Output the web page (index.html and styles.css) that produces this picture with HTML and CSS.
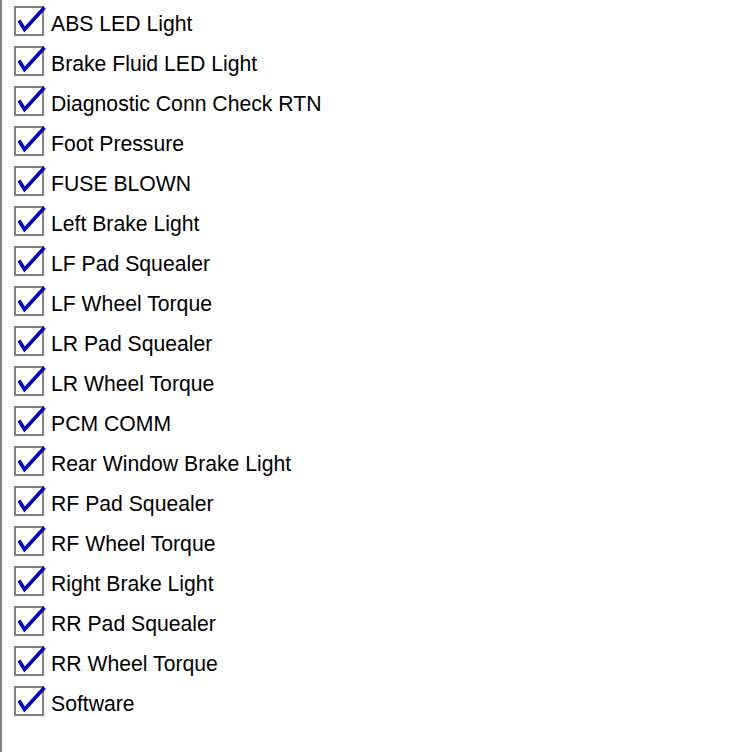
FILE: index.html
```html
<html>
  <head>
    <link rel="stylesheet" href="styles.css">
  </head>
  <body>
    <div class="check-list">
      <div class="item"><span class="box"></span><span class="label">ABS LED Light</span></div>
      <div class="item"><span class="box"></span><span class="label">Brake Fluid LED Light</span></div>
      <div class="item"><span class="box"></span><span class="label">Diagnostic Conn Check RTN</span></div>
      <div class="item"><span class="box"></span><span class="label">Foot Pressure</span></div>
      <div class="item"><span class="box"></span><span class="label">FUSE BLOWN</span></div>
      <div class="item"><span class="box"></span><span class="label">Left Brake Light</span></div>
      <div class="item"><span class="box"></span><span class="label">LF Pad Squealer</span></div>
      <div class="item"><span class="box"></span><span class="label">LF Wheel Torque</span></div>
      <div class="item"><span class="box"></span><span class="label">LR Pad Squealer</span></div>
      <div class="item"><span class="box"></span><span class="label">LR Wheel Torque</span></div>
      <div class="item"><span class="box"></span><span class="label">PCM COMM</span></div>
      <div class="item"><span class="box"></span><span class="label">Rear Window Brake Light</span></div>
      <div class="item"><span class="box"></span><span class="label">RF Pad Squealer</span></div>
      <div class="item"><span class="box"></span><span class="label">RF Wheel Torque</span></div>
      <div class="item"><span class="box"></span><span class="label">Right Brake Light</span></div>
      <div class="item"><span class="box"></span><span class="label">RR Pad Squealer</span></div>
      <div class="item"><span class="box"></span><span class="label">RR Wheel Torque</span></div>
      <div class="item"><span class="box"></span><span class="label">Software</span></div>
    </div>
    <script>
      // same tick in every box, coords from the box's outer corner
      document.querySelectorAll(".box").forEach((box) => {
        box.innerHTML =
          '<svg class="tick" width="34" height="34" viewBox="0 0 34 34">' +
          '<path d="M5 14.5 L10.5 23.5 L30.5 1.5" fill="none" stroke="#0000c4" stroke-width="3.6" stroke-linejoin="miter"/>' +
          "</svg>";
      });
    </script>
  </body>
</html>
```

FILE: styles.css
```css
body {
  margin: 0;
  background: #ffffff;
}
.check-list {
  border-left: 2px solid #808080;
  height: 752px;
  box-sizing: border-box;
  padding-top: 1px;
  font-family: "Liberation Sans", Arial, sans-serif;
  font-size: 21.2px;
  color: #000000;
}
.item {
  display: flex;
  align-items: flex-start;
  height: 40px;
}
.box {
  position: relative;
  display: inline-block;
  width: 26px;
  height: 26px;
  border: 2px solid #808080;
  margin: 5px 0 0 12px;
  background: #ffffff;
}
.tick {
  position: absolute;
  left: -2px;
  top: -2px;
}
.label {
  margin-left: 7px;
  padding-top: 12px;
  line-height: 22px;
  white-space: nowrap;
}
```
